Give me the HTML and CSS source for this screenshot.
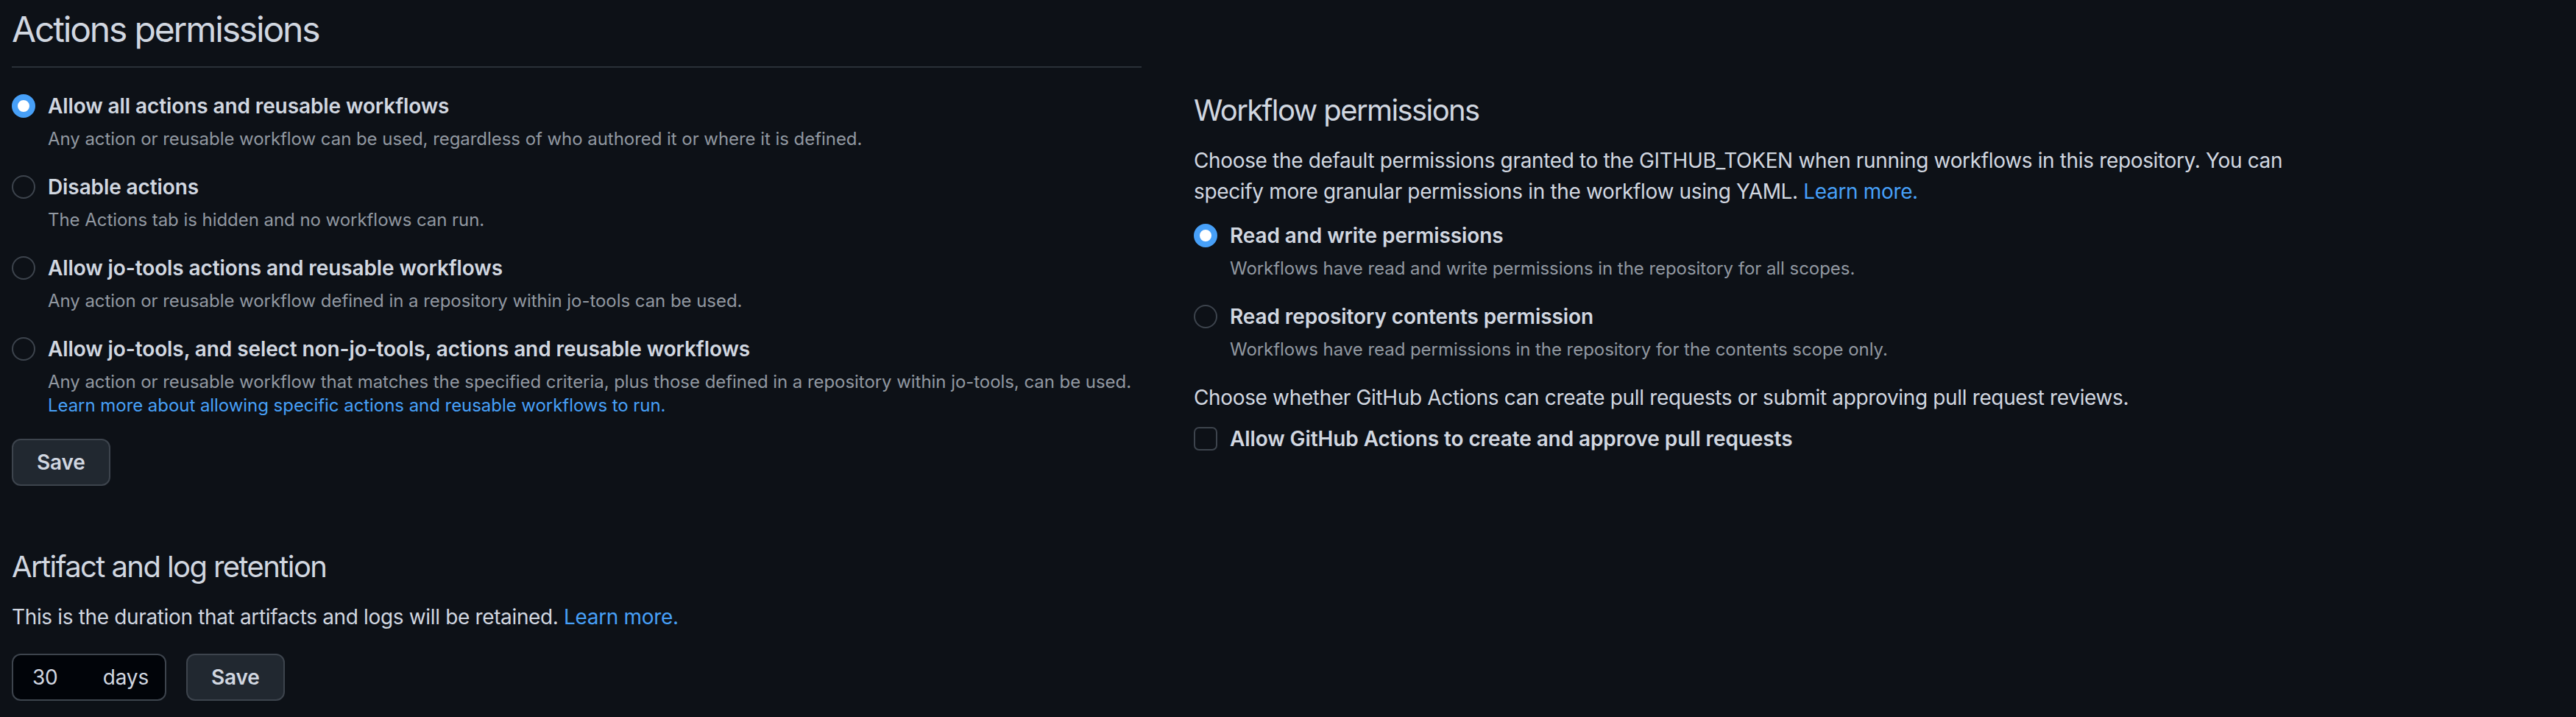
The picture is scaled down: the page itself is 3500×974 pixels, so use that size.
FILE: index.html
```html
<!DOCTYPE html>
<html lang="en">
<head>
<meta charset="utf-8">
<title>Actions settings</title>
<link rel="stylesheet" href="styles.css">
</head>
<body>
<div class="page">
  <section class="col col-left">
    <div class="subhead"><h2 class="subhead-title">Actions permissions</h2></div>
    <div class="options">
      <div class="option">
        <span class="radio is-checked"></span>
        <div class="option-body">
          <div class="option-label">Allow all actions and reusable workflows</div>
          <div class="note">Any action or reusable workflow can be used, regardless of who authored it or where it is defined.</div>
        </div>
      </div>
      <div class="option">
        <span class="radio"></span>
        <div class="option-body">
          <div class="option-label">Disable actions</div>
          <div class="note">The Actions tab is hidden and no workflows can run.</div>
        </div>
      </div>
      <div class="option">
        <span class="radio"></span>
        <div class="option-body">
          <div class="option-label">Allow jo-tools actions and reusable workflows</div>
          <div class="note">Any action or reusable workflow defined in a repository within jo-tools can be used.</div>
        </div>
      </div>
      <div class="option">
        <span class="radio"></span>
        <div class="option-body">
          <div class="option-label">Allow jo-tools, and select non-jo-tools, actions and reusable workflows</div>
          <div class="note">Any action or reusable workflow that matches the specified criteria, plus those defined in a repository within jo-tools, can be used.<br><a class="link" href="#">Learn more about allowing specific actions and reusable workflows to run.</a></div>
        </div>
      </div>
    </div>
    <button class="btn btn-save-main" type="button">Save</button>

    <h3 class="section-title section-title-artifact">Artifact and log retention</h3>
    <p class="text text-artifact">This is the duration that artifacts and logs will be retained. <a class="link" href="#">Learn more.</a></p>
    <div class="retention-row">
      <div class="days-input"><span class="days-value">30</span><span class="days-suffix">days</span></div>
      <button class="btn" type="button">Save</button>
    </div>
  </section>

  <section class="col col-right">
    <h3 class="section-title">Workflow permissions</h3>
    <p class="text text-workflow">Choose the default permissions granted to the GITHUB_TOKEN when running workflows in this repository. You can specify more granular permissions in the workflow using YAML. <a class="link" href="#">Learn more.</a></p>
    <div class="options options-right">
      <div class="option">
        <span class="radio is-checked"></span>
        <div class="option-body">
          <div class="option-label">Read and write permissions</div>
          <div class="note">Workflows have read and write permissions in the repository for all scopes.</div>
        </div>
      </div>
      <div class="option">
        <span class="radio"></span>
        <div class="option-body">
          <div class="option-label">Read repository contents permission</div>
          <div class="note">Workflows have read permissions in the repository for the contents scope only.</div>
        </div>
      </div>
    </div>
    <p class="text text-pr">Choose whether GitHub Actions can create pull requests or submit approving pull request reviews.</p>
    <div class="check-row">
      <span class="checkbox"></span>
      <span class="option-label">Allow GitHub Actions to create and approve pull requests</span>
    </div>
  </section>
</div>
</body>
</html>
```
FILE: styles.css
```css
* { box-sizing: border-box; }

html, body {
  margin: 0;
  padding: 0;
  background: #0d1117;
}

body {
  font-family: Inter, "Noto Sans", "Liberation Sans", sans-serif;
  color: #d1d7e0;
  width: 3500px;
  height: 974px;
  overflow: hidden;
}

.page {
  display: flex;
  gap: 71px;
  padding-left: 16px;
}

.col {
  width: 1535px;
  flex: none;
  display: flex;
  flex-direction: column;
  align-items: flex-start;
}

.subhead {
  align-self: stretch;
  padding-top: 10px;
  padding-bottom: 20px;
  border-bottom: 2px solid #2a3038;
}

.subhead-title {
  margin: 0;
  font-size: 48px;
  line-height: 60px;
  font-weight: 400;
  letter-spacing: -0.045em;
}

.options {
  display: flex;
  flex-direction: column;
  gap: 28px;
  margin-top: 31px;
}

.options-right { margin-top: 18px; }

.option {
  display: flex;
  align-items: flex-start;
  gap: 17px;
}

.radio {
  flex: none;
  width: 32px;
  height: 32px;
  margin-top: 5px;
  border-radius: 50%;
  border: 2px solid #3d444d;
}

.radio.is-checked {
  border: 8px solid #47a0f8;
  background: #ffffff;
}

.option-label {
  font-size: 28px;
  line-height: 42px;
  font-weight: 600;
  color: #d1d7e0;
  letter-spacing: -0.1px;
}

.note {
  margin-top: 8px;
  font-size: 24px;
  line-height: 32px;
  color: #9198a1;
  letter-spacing: -0.05px;
}

.link {
  color: #47a0f8;
  text-decoration: none;
}

.btn {
  height: 64px;
  padding: 0 32px;
  border: 2px solid #3d444d;
  border-radius: 12px;
  background: #212830;
  color: #d1d7e0;
  font-family: inherit;
  font-size: 28px;
  font-weight: 600;
  line-height: 1;
  letter-spacing: -0.2px;
}

.btn-save-main { margin-top: 29px; }

.section-title {
  margin: 0;
  font-size: 40px;
  line-height: 50px;
  font-weight: 400;
  letter-spacing: -0.04em;
}

.section-title-artifact { margin-top: 85px; }

.col-right { padding-top: 125px; }

.text {
  margin: 22px 0 0;
  font-size: 28px;
  line-height: 42px;
  letter-spacing: -0.35px;
}

.text-pr { margin-top: 28px; }

.retention-row {
  display: flex;
  gap: 27px;
  margin-top: 29px;
}

.days-input {
  width: 210px;
  height: 64px;
  display: flex;
  align-items: center;
  justify-content: space-between;
  padding: 0 22px 0 26px;
  background: #010409;
  border: 2px solid #3d444d;
  border-radius: 12px;
  font-size: 28px;
  letter-spacing: -0.2px;
}

.check-row {
  display: flex;
  align-items: flex-start;
  gap: 17px;
  margin-top: 14px;
}

.checkbox {
  flex: none;
  width: 32px;
  height: 32px;
  margin-top: 5px;
  border: 2px solid #3d444d;
  border-radius: 7px;
}
```
